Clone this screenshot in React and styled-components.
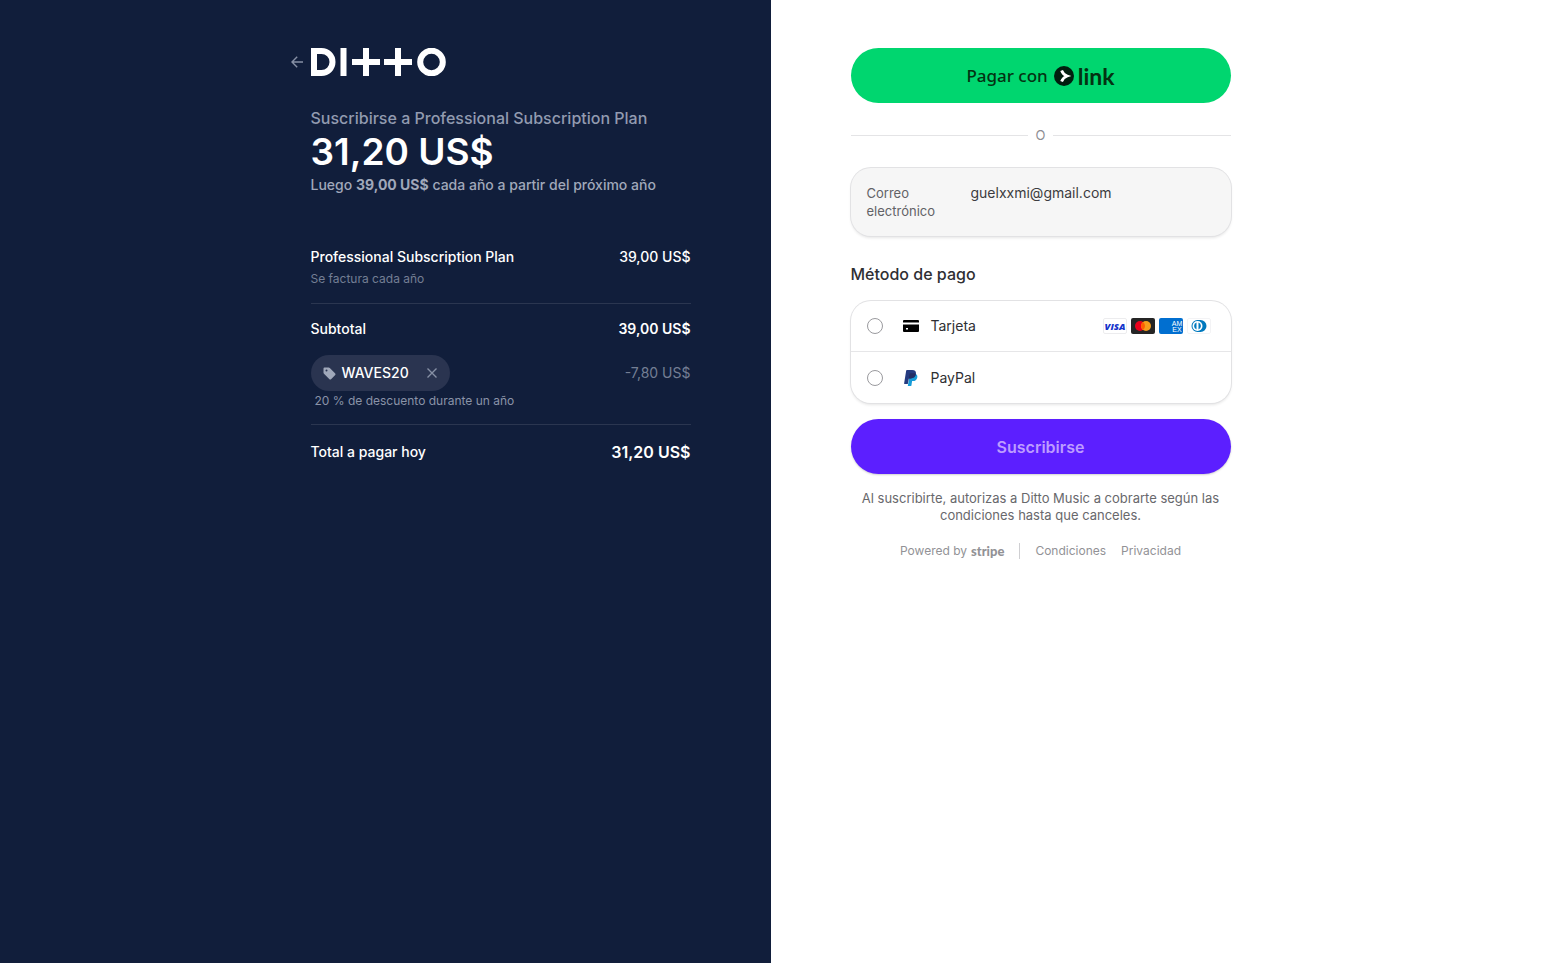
import React from "react";
import styled, { createGlobalStyle } from "styled-components";

const GlobalStyle = createGlobalStyle`
  *, *::before, *::after { box-sizing: border-box; }
  body {
    margin: 0;
    background: #fff;
    font-family: Inter, "Liberation Sans", sans-serif;
    color: #2f2f33;
  }
  h1, h2, p, form { margin: 0; padding: 0; }
  button, input { font-family: inherit; }
`;

const Page = styled.div`
  display: grid;
  grid-template-columns: 1fr 1fr;
  min-height: 100vh;
`;

const SummaryPanel = styled.section`
  display: flex;
  justify-content: flex-end;
  padding: 48px 80px 48px 24px;
  background: #111e3b;
  color: #fff;
`;

const PaymentPanel = styled.main`
  padding: 48px 24px 48px 80px;
`;

const Column = styled.div`
  width: 100%;
  max-width: 380px;
`;

const Header = styled.header`
  display: flex;
  align-items: center;
  gap: 8px;
  height: 28px;
  margin-left: -20px;
`;

const IconButton = styled.button`
  display: flex;
  align-items: center;
  justify-content: center;
  padding: 0;
  border: 0;
  background: none;
  color: #8790a5;
  cursor: pointer;
`;

const Svg = styled.svg`
  display: block;
  flex: none;
`;

const PlanTitle = styled.h1`
  margin-top: 30px;
  font-size: 16px;
  line-height: 24px;
  font-weight: 500;
  color: #929bb0;
`;

const Price = styled.p`
  font-size: 37px;
  line-height: 44px;
  font-weight: 600;
`;

const Renewal = styled.p`
  font-size: 14px;
  line-height: 22px;
  font-weight: 500;
  color: #a0a8ba;

  strong { font-weight: 700; }
`;

const Items = styled.div`
  margin-top: 50px;
`;

const Row = styled.div`
  display: flex;
  justify-content: space-between;
  align-items: center;
  font-size: 14px;
  line-height: ${(p) => (p.$total ? "26px" : "22px")};
  font-weight: 500;
`;

const Amount = styled.span`
  font-size: ${(p) => (p.$large ? "16px" : "14px")};
  font-weight: ${(p) => (p.$muted ? 400 : p.$strong ? 600 : 500)};
  color: ${(p) => (p.$muted ? "#747e94" : "inherit")};
`;

const Note = styled.p`
  padding-left: ${(p) => (p.$indent ? "4px" : "0")};
  font-size: 12px;
  line-height: ${(p) => (p.$indent ? "19px" : "21px")};
  color: ${(p) => (p.$indent ? "#8a93a8" : "#747e94")};
`;

const Divider = styled.hr`
  height: 1px;
  margin: 14px 0;
  border: 0;
  background: #2b3650;
`;

const Coupon = styled.div`
  display: flex;
  align-items: center;
  height: 36px;
  padding: 0 12px;
  border-radius: 18px;
  background: #2a3450;
  color: #a0a8ba;
`;

const CouponCode = styled.span`
  margin: 0 17px 0 6px;
  color: #fff;
  font-weight: 500;
`;

const Discount = styled.div`
  margin-top: 15px;
`;

const PillButton = styled.button`
  display: flex;
  align-items: center;
  justify-content: center;
  gap: 6px;
  width: 100%;
  height: 55px;
  padding: 0;
  border: 0;
  border-radius: 28px;
  cursor: pointer;
`;

const LinkButton = styled(PillButton)`
  background: #00d66f;
  color: #043312;
  font-family: "Noto Sans", sans-serif;
  font-size: 17px;
  font-weight: 500;
`;

const LinkMark = styled.span`
  display: flex;
  align-items: center;
  gap: 4px;
  font-family: Lato, sans-serif;
  font-size: 23px;
  line-height: 24px;
  font-weight: 700;
`;

const SubscribeButton = styled(PillButton)`
  margin-top: 16px;
  background: #5c1fff;
  color: #bd9cff;
  font-size: 16px;
  font-weight: 600;
  box-shadow: 0 1px 2px #00000030;
`;

const Separator = styled.div`
  display: flex;
  align-items: center;
  gap: 8px;
  height: 20px;
  margin: 22px 0 23px;
  font-size: 13px;
  color: #8e8e93;

  &::before, &::after {
    content: "";
    flex: 1;
    height: 1px;
    background: #e4e4e6;
  }
`;

const Card = styled.div`
  border-radius: 20px;
  background: ${(p) => (p.$filled ? "#f6f6f6" : "#fff")};
  box-shadow: 0 0 0 1px #e2e2e4, 0 2px 3px #0000001a;
`;

const EmailField = styled(Card)`
  display: grid;
  grid-template-columns: 88px 1fr;
  gap: 16px;
  align-items: start;
  padding: 16px;
`;

const EmailLabel = styled.label`
  font-size: 13px;
  line-height: 18px;
  color: #626266;
`;

const EmailInput = styled.input`
  width: 100%;
  height: 17px;
  padding: 0;
  border: 0;
  outline: 0;
  background: none;
  font-size: 14px;
  color: #3c3c40;
`;

const SectionTitle = styled.h2`
  margin: 26px 0 15px;
  font-size: 16px;
  line-height: 24px;
  font-weight: 500;
  color: #2f2f33;
`;

const Method = styled.label`
  display: flex;
  align-items: center;
  height: 50px;
  padding: 0 20px 0 16px;
  font-size: 14px;
  line-height: 16px;
  cursor: pointer;

  & + & {
    height: 52px;
    border-top: 1px solid #e6e6e8;
  }
`;

const Radio = styled.input`
  appearance: none;
  width: 16px;
  height: 16px;
  margin: 0 20px 0 0;
  border: 1px solid #9a9a9e;
  border-radius: 50%;
  background: #fff;

  &:checked { border: 5px solid #5c1fff; }
`;

const MethodName = styled.span`
  margin-left: 12px;
`;

const Brands = styled.span`
  display: flex;
  gap: 4px;
  margin-left: auto;
`;

const Legal = styled.p`
  margin-top: 16px;
  font-size: 13px;
  line-height: 17px;
  text-align: center;
  color: #68686c;
`;

const Footer = styled.footer`
  display: flex;
  align-items: center;
  justify-content: center;
  gap: 15px;
  margin-top: 19px;
  font-size: 12px;
  line-height: 16px;
  color: #929296;
`;

const FooterLink = styled.a`
  display: flex;
  align-items: center;
  gap: 4px;
  color: inherit;
  text-decoration: none;
`;

const StripeMark = styled.strong`
  font-family: Lato, sans-serif;
  font-size: 13px;
  font-weight: 900;
`;

const FooterRule = styled.span`
  width: 1px;
  height: 16px;
  background: #cfcfd2;
`;

const BackArrow = () => (
  <Svg width="12" height="12" viewBox="0 0 12 12" fill="none" stroke="currentColor" strokeWidth="1.4" aria-hidden="true">
    <path d="M6.2 0.8 1 6l5.2 5.2M1 6h11" />
  </Svg>
);

const DittoLogo = () => (
  <Svg width="136" height="28" viewBox="0 0 136 28" fill="none" stroke="#fff" strokeWidth="6" role="img" aria-label="Ditto">
    <path d="M3 3h7.5a11 11 0 0 1 0 22H3z" />
    <path d="M32.5 0v28M55 0v28M87 0v28M41 14h28M73 14h28" />
    <circle cx="120.5" cy="14" r="11.3" />
  </Svg>
);

const TagIcon = () => (
  <Svg width="13" height="13" viewBox="0 0 13 13" fill="currentColor" aria-hidden="true">
    <path fillRule="evenodd" d="M1.5.5h4.2c.4 0 .8.2 1.1.5l5.2 5.2a1.5 1.5 0 0 1 0 2.1L8.3 12a1.5 1.5 0 0 1-2.1 0L1 6.8a1.5 1.5 0 0 1-.5-1.1V1.5a1 1 0 0 1 1-1zM3.5 2.5a1 1 0 1 0 0 2 1 1 0 0 0 0-2z" />
  </Svg>
);

const CloseIcon = () => (
  <Svg width="12" height="12" viewBox="0 0 12 12" fill="none" stroke="currentColor" strokeWidth="1.4" aria-hidden="true">
    <path d="m1.5 1.5 9 9m0-9-9 9" />
  </Svg>
);

const LinkIcon = () => (
  <Svg width="20" height="20" viewBox="0 0 20 20" aria-hidden="true">
    <circle cx="10" cy="10" r="10" fill="#011e0f" />
    <path d="M7.6 4.5c.9 2.600 2.800 4.500 5.600 5.500-2.800 1-4.700 2.900-5.600 5.500" fill="none" stroke="#fff" strokeWidth="2.8" />
  </Svg>
);

const CardIcon = () => (
  <Svg width="16" height="12" viewBox="0 0 16 12" aria-hidden="true">
    <path fillRule="evenodd" fill="#000" d="M1 0h14a1 1 0 0 1 1 1v1.5H0V1a1 1 0 0 1 1-1zM0 4.5h16V11a1 1 0 0 1-1 1H1a1 1 0 0 1-1-1zM3 8v1.5h2V8z" />
  </Svg>
);

const PaypalIcon = () => (
  <Svg width="16" height="16" viewBox="0 0 16 16" aria-hidden="true">
    <path fill="#179bd7" d="M12.9 3.9c1.3.7 1.7 2 1.4 3.6-.5 2.5-2.1 3.6-4.5 3.6h-.7L8.4 15.4c-.1.4-.3.6-.7.6H4.8l.5-3L7 4z" />
    <path fill="#253b80" d="M3.9 0h5.3c2.8 0 4.2 1.4 3.7 4.1-.5 2.9-2.4 4.3-5.3 4.3H5.9L4.8 14H1.5c-.3 0-.4-.2-.4-.5L3.2.6c.1-.4.3-.6.7-.6z" />
    <path fill="#222d65" d="M6.5 3.9c.1-.4.4-.6.7-.6h3.7c.8 0 1.5.1 2 .5-.4 3.1-2.3 4.6-5.3 4.6H5.8z" />
  </Svg>
);

const VisaCard = () => (
  <Svg width="24" height="16" viewBox="0 0 24 16" role="img" aria-label="Visa">
    <rect x=".5" y=".5" width="23" height="15" rx="1.5" fill="#fff" stroke="#ececee" />
    <text x="12" y="11.5" textAnchor="middle" fill="#1434cb" fontFamily="Open Sans, sans-serif" fontSize="9.5" fontStyle="italic" fontWeight="800">VISA</text>
  </Svg>
);

const MastercardCard = () => (
  <Svg width="24" height="16" viewBox="0 0 24 16" role="img" aria-label="Mastercard">
    <rect width="24" height="16" rx="2" fill="#252525" />
    <circle cx="9" cy="8" r="5" fill="#eb001b" />
    <circle cx="15" cy="8" r="5" fill="#f79e1b" />
    <path d="M12 4a5 5 0 0 1 0 8 5 5 0 0 1 0-8z" fill="#ff5f00" />
  </Svg>
);

const AmexCard = () => (
  <Svg width="24" height="16" viewBox="0 0 24 16" role="img" aria-label="American Express">
    <rect width="24" height="16" rx="2" fill="#016fd0" />
    <g fill="#fff" fontFamily="Liberation Sans, sans-serif" fontSize="7" textAnchor="middle">
      <text x="18" y="7.5">AM</text>
      <text x="18" y="13.5">EX</text>
    </g>
  </Svg>
);

const DinersCard = () => (
  <Svg width="24" height="16" viewBox="0 0 24 16" role="img" aria-label="Diners Club">
    <rect x=".5" y=".5" width="23" height="15" rx="1.5" fill="#fff" stroke="#f3f3f5" />
    <path d="M10.5 2h3a6 6 0 0 1 0 12h-3a6 6 0 0 1 0-12z" fill="#0079be" />
    <circle cx="10.5" cy="8" r="5" fill="#fff" />
    <path d="M9.5 4.6v6.8a3.6 3.6 0 0 1 0-6.8zM11.5 4.6v6.8a3.6 3.6 0 0 0 0-6.8z" fill="#0079be" />
  </Svg>
);

export default function App() {
  return (
    <>
      <GlobalStyle />
      <Page>
        <SummaryPanel>
          <Column>
            <Header>
              <IconButton type="button" aria-label="Volver">
                <BackArrow />
              </IconButton>
              <DittoLogo />
            </Header>
            <PlanTitle>Suscribirse a Professional Subscription Plan</PlanTitle>
            <Price>31,20 US$</Price>
            <Renewal>
              Luego <strong>39,00 US$</strong> cada año a partir del próximo año
            </Renewal>

            <Items>
              <Row>
                <span>Professional Subscription Plan</span>
                <Amount>39,00 US$</Amount>
              </Row>
              <Note>Se factura cada año</Note>
              <Divider />
              <Row>
                <span>Subtotal</span>
                <Amount $strong>39,00 US$</Amount>
              </Row>
              <Discount>
                <Row>
                  <Coupon>
                    <TagIcon />
                    <CouponCode>WAVES20</CouponCode>
                    <IconButton type="button" aria-label="Quitar código">
                      <CloseIcon />
                    </IconButton>
                  </Coupon>
                  <Amount $muted>-7,80 US$</Amount>
                </Row>
                <Note $indent>20 % de descuento durante un año</Note>
              </Discount>
              <Divider />
              <Row $total>
                <span>Total a pagar hoy</span>
                <Amount $large $strong>31,20 US$</Amount>
              </Row>
            </Items>
          </Column>
        </SummaryPanel>

        <PaymentPanel>
          <Column>
            <LinkButton type="button">
              Pagar con
              <LinkMark>
                <LinkIcon />
                link
              </LinkMark>
            </LinkButton>
            <Separator>O</Separator>
            <form onSubmit={(e) => e.preventDefault()}>
              <EmailField $filled>
                <EmailLabel htmlFor="email">Correo electrónico</EmailLabel>
                <EmailInput id="email" type="email" value="guelxxmi@gmail.com" readOnly />
              </EmailField>
              <SectionTitle id="method">Método de pago</SectionTitle>
              <Card role="radiogroup" aria-labelledby="method">
                <Method>
                  <Radio type="radio" name="method" value="card" />
                  <CardIcon />
                  <MethodName>Tarjeta</MethodName>
                  <Brands>
                    <VisaCard />
                    <MastercardCard />
                    <AmexCard />
                    <DinersCard />
                  </Brands>
                </Method>
                <Method>
                  <Radio type="radio" name="method" value="paypal" />
                  <PaypalIcon />
                  <MethodName>PayPal</MethodName>
                </Method>
              </Card>
              <SubscribeButton type="submit">Suscribirse</SubscribeButton>
            </form>
            <Legal>
              Al suscribirte, autorizas a Ditto Music a cobrarte según las condiciones hasta que canceles.
            </Legal>
            <Footer>
              <FooterLink href="#stripe">
                Powered by <StripeMark>stripe</StripeMark>
              </FooterLink>
              <FooterRule />
              <FooterLink href="#condiciones">Condiciones</FooterLink>
              <FooterLink href="#privacidad">Privacidad</FooterLink>
            </Footer>
          </Column>
        </PaymentPanel>
      </Page>
    </>
  );
}
